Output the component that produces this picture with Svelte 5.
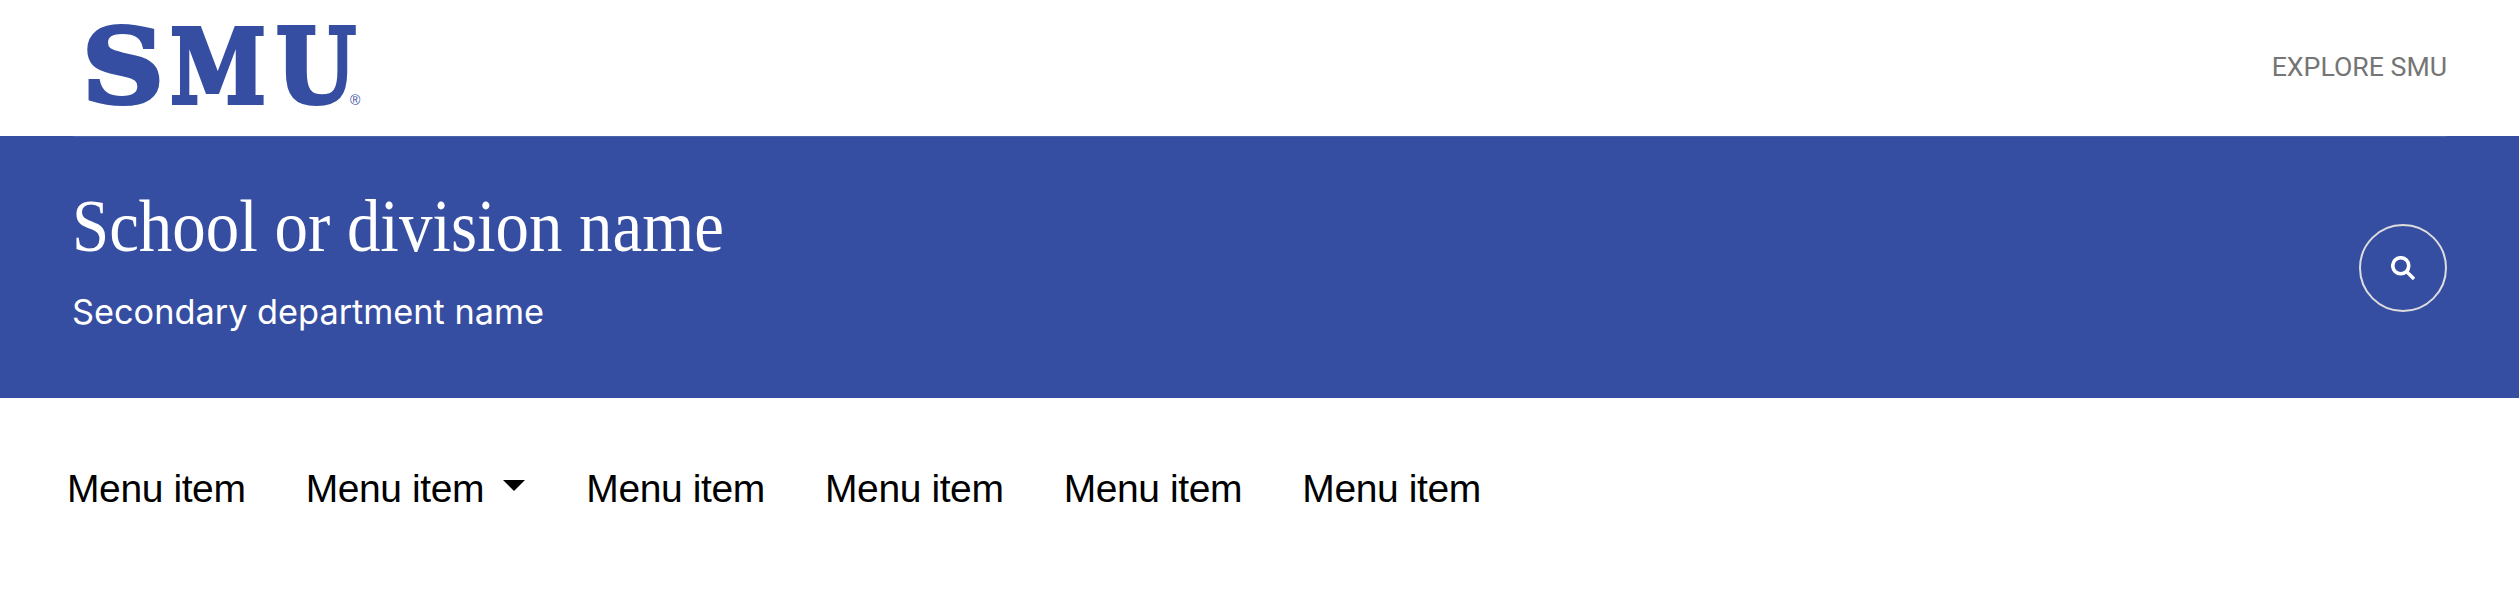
<script>
  const items = [
    { label: 'Menu item' },
    { label: 'Menu item', caret: true },
    { label: 'Menu item' },
    { label: 'Menu item' },
    { label: 'Menu item' },
    { label: 'Menu item' }
  ];
</script>

<div class="page">
  <header class="top">
    <div class="logo" aria-label="SMU">
      <svg width="290" height="136" viewBox="0 0 290 136">
        <text class="logo-s" x="1" y="103" textLength="82" lengthAdjust="spacingAndGlyphs">S</text>
        <text class="logo-s" x="89" y="103" textLength="96" lengthAdjust="spacingAndGlyphs">M</text>
        <text class="logo-s" x="195" y="103" textLength="80" lengthAdjust="spacingAndGlyphs">U</text>
        <text class="logo-r" x="269" y="105">®</text>
      </svg>
    </div>
    <a class="explore" href="#explore">EXPLORE SMU</a>
  </header>

  <section class="banner">
    <div class="titles">
      <h1>School or division name</h1>
      <p>Secondary department name</p>
    </div>
    <button class="search" aria-label="Search">
      <svg width="24" height="24" viewBox="0 0 24 24" fill="none" stroke="#fff">
        <circle cx="9.75" cy="9.75" r="8" stroke-width="3.6" />
        <path d="M15.5 15.5 L23 23" stroke-width="3.4" />
      </svg>
    </button>
  </section>

  <nav class="menu">
    {#each items as item}
      <a href="#item" class="item">
        <span>{item.label}</span>
        {#if item.caret}<i class="caret"></i>{/if}
      </a>
    {/each}
  </nav>
</div>

<style>
  :global(body) { margin: 0; background: #fff; }
  .page { width: 2519px; height: 603px; display: flex; flex-direction: column; overflow: hidden; }
  .top { height: 136px; box-sizing: border-box; display: flex; align-items: flex-start; justify-content: space-between; padding: 0 72px 0 81px; }
  .logo svg { display: block; }
  .logo-s { font-family: "DejaVu Serif", serif; font-weight: 700; font-size: 103px; fill: #364ea2; stroke: #364ea2; stroke-width: 4px; }
  .logo-r { font-family: "Liberation Sans", sans-serif; font-size: 14px; fill: #364ea2; }
  .explore { font-family: Roboto, sans-serif; font-size: 26.7px; color: #757575; text-decoration: none; margin-top: 51px; line-height: 32px; }
  .banner { height: 262px; box-sizing: border-box; background: linear-gradient(#4c62ac, #4c62ac) no-repeat 73px 0 / 2374px 1px, #364ea2; color: #fff; display: flex; align-items: flex-start; justify-content: space-between; padding: 0 72px; }
  .titles { padding-top: 51px; }
  h1 { margin: 0; font-family: "Liberation Serif", serif; font-weight: 400; font-size: 73px; line-height: 80px; transform: scaleX(.916); transform-origin: left center; white-space: nowrap; }
  .titles p { margin: 24px 0 0; font-family: Inter, sans-serif; font-size: 34.3px; line-height: 42px; }
  .search { width: 88px; height: 88px; margin-top: 88px; border: 2px solid #ddd; border-radius: 50%; background: none; padding: 0; display: flex; align-items: center; justify-content: center; }
  .menu { display: flex; gap: 60.2px; padding: 69px 0 0 67px; font-family: "Liberation Sans", sans-serif; font-size: 39px; letter-spacing: -0.4px; line-height: 44px; }
  .item { color: #000; text-decoration: none; display: flex; align-items: center; }
  .caret { width: 0; height: 0; margin: -8px 1px 0 19px; border-left: 11px solid transparent; border-right: 11px solid transparent; border-top: 11px solid #000; }
</style>
